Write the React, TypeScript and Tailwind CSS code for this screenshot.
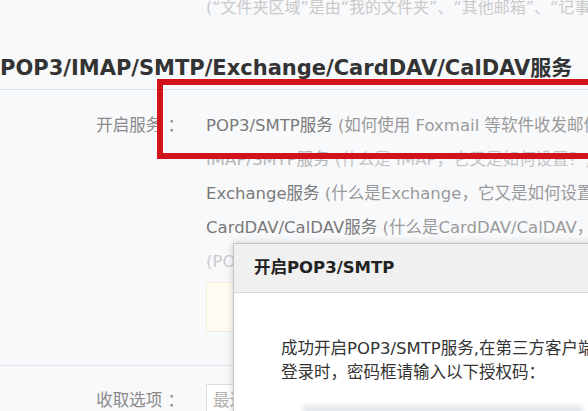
import React from "react";

const rows = [
  { name: "POP3/SMTP服务", note: " (如何使用 Foxmail 等软件收发邮件？)", nameColor: "text-[#7a7a7a]", noteColor: "text-[#9a9a9a]" },
  { name: "IMAP/SMTP服务", note: " (什么是 IMAP，它又是如何设置？)", nameColor: "text-[#b5b5b5]", noteColor: "text-[#c4c4c4]" },
  { name: "Exchange服务", note: " (什么是Exchange，它又是如何设置？)", nameColor: "text-[#7a7a7a]", noteColor: "text-[#9a9a9a]" },
  { name: "CardDAV/CalDAV服务", note: " (什么是CardDAV/CalDAV，它又是如何设置？)", nameColor: "text-[#7a7a7a]", noteColor: "text-[#9a9a9a]" },
];

export default function App() {
  return (
    <div className="relative w-[588px] h-[411px] overflow-hidden bg-[#f8f9fb] font-['DejaVu_Sans','Noto_Sans_CJK_SC',sans-serif]">
      {/* folder note */}
      <p className="pl-[206px] text-[16px] leading-[16px] text-[#cacaca] whitespace-nowrap">
        (“文件夹区域”是由“我的文件夹”、“其他邮箱”、“记事本”组成)
      </p>

      <h2 className="mt-[40px] text-[21px] leading-[24px] font-bold text-[#333] whitespace-nowrap">
        POP3/IMAP/SMTP/Exchange/CardDAV/CalDAV服务
      </h2>
      <div className="mt-[9px] border-t border-[#dde2e8]" />

      {/* services */}
      <div className="flex pt-[19px] text-[16.5px] leading-[34px]">
        <div className="w-[184px] shrink-0 text-right text-[#8a8a8a]">开启服务 ：</div>
        <div className="ml-[22px] flex flex-col whitespace-nowrap">
          {rows.map((r) => (
            <div key={r.name}>
              <span className={r.nameColor}>{r.name}</span>
              <span className={r.noteColor}>{r.note}</span>
            </div>
          ))}
          <div className="text-[#cccccc]">(POP3/IMAP/SMTP/CardDAV/CalDAV服务均支持SSL连接。如何设置？)</div>
          <div className="mt-[3px] h-[50px] w-[320px] bg-[#fffdf1] border border-[#f2eedb]" />
        </div>
      </div>

      <div className="mt-[33px] border-t border-[#e3e6ea]" />

      {/* receive options */}
      <div className="flex items-center pt-[18px] text-[16.5px]">
        <div className="w-[184px] shrink-0 text-right text-[#8a8a8a]">收取选项 ：</div>
        <div className="ml-[22px] h-[34px] w-[200px] bg-white border border-[#dcdcdc] pl-[6px] leading-[32px] text-[#b0b0b0]">
          最近30天
        </div>
      </div>

      {/* highlight annotation */}
      <div className="absolute left-[157px] top-[79px] w-[500px] h-[80px] border-[6px] border-[#d3131c]" />

      {/* dialog */}
      <div className="absolute left-[233px] top-[243px] w-[420px] h-[220px] bg-white border border-[#c4c4c4] shadow-[0_0_8px_rgba(0,0,0,0.18)]">
        <div className="h-[49px] bg-[#f0f0f0] border-b border-[#d9d9d9] pl-[20px] text-[16.5px] leading-[48px] font-bold text-[#222] whitespace-nowrap">
          开启POP3/SMTP
        </div>
        <div className="pl-[47px] pt-[44px] text-[16.5px] leading-[24px] text-[#333] whitespace-nowrap">
          <p>成功开启POP3/SMTP服务,在第三方客户端</p>
          <p>登录时，密码框请输入以下授权码：</p>
          <div className="mt-[20px] ml-[22px] h-[24px] w-[280px] bg-[#e6e9ee] blur-[2px]" />
        </div>
      </div>
    </div>
  );
}
